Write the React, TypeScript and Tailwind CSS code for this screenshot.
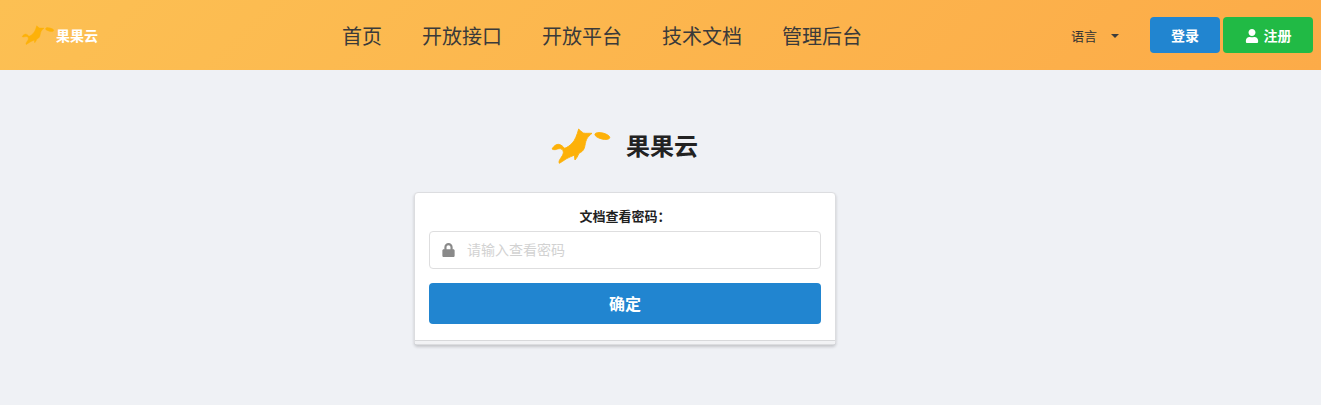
import { FaLock, FaUser } from "react-icons/fa";

const font = "font-['Inter','Noto_Sans_CJK_SC',sans-serif]";

function FoxLogo({ className }: { className: string }) {
  return (
    <svg viewBox="0 0 198 126" className={className} fill="#fdb109" stroke="#fdb109" strokeWidth="2.5" strokeLinejoin="round">
      <path d="M12 75C17 66 25 60 32 61C40 62 45 68 50 73C58 70 65 65 72 58C81 49 87 33 92 15C96 19 100 23 106 27C114 29 122 27 132 28C125 34 119 39 116 46C112 54 112 63 109 72C106 81 99 85 93 88C89 97 86 103 81 108C79 101 79 97 80 93C72 97 62 100 54 105C47 110 41 114 34 118C32 114 33 110 37 104C41 98 46 92 46 85C46 78 40 73 33 74C25 75 20 80 12 75Z" />
      <ellipse cx="163" cy="36" rx="23" ry="9" transform="rotate(14 163 36)" />
    </svg>
  );
}

export default function App() {
  return (
    <div className={`${font} min-h-[405px] bg-[#eff1f5] text-[#1f1f1f]`}>
      <header className="flex items-center justify-between h-[70px] pl-[20px] pr-2 bg-[linear-gradient(135deg,#fcc053,#fcab48)]">
        <div className="flex items-center w-[322px]">
          <FoxLogo className="w-[36px] h-[23px] mb-[2px]" />
          <span className="text-sm font-bold text-white pt-[2px]">果果云</span>
        </div>
        <nav className="flex gap-10 text-[20px] text-[#3a3a3a] pt-[3px]">
          <a>首页</a>
          <a>开放接口</a>
          <a>开放平台</a>
          <a>技术文档</a>
          <a>管理后台</a>
        </nav>
        <div className="flex items-center ml-auto">
          <div className="flex items-center text-[13px] text-[#333] mr-[31px]">
            <span className="pt-[3px]">语言</span>
            <span className="ml-[14px] mt-[2px] border-x-4 border-t-4 border-x-transparent border-t-[#3c3c3c]" />
          </div>
          <button className="w-[70px] h-9 pt-px rounded bg-[#2185d0] text-white text-sm font-bold">登录</button>
          <button className="flex items-center justify-center gap-[5px] w-[90px] h-9 pt-px ml-[3px] rounded bg-[#21ba45] text-white text-sm font-bold">
            <FaUser className="w-[14px] h-[14px]" />
            注册
          </button>
        </div>
      </header>

      <main className="flex flex-col items-center pt-[54px] pr-[71px]">
        <div className="flex items-center gap-3 -ml-1">
          <FoxLogo className="w-[66px] h-[42px]" />
          <h1 className="text-2xl font-bold text-[#222] pt-[3px]">果果云</h1>
        </div>

        <form className="w-[422px] mt-[26px] bg-white border border-[#dcdde0] rounded shadow-[0_2px_3px_rgba(34,36,38,0.2)]">
          <div className="px-[14px] pt-[13px] pb-[16px] border-b border-[#d8d9db]">
            <label className="block text-center text-[13px] font-bold leading-[20px]">文档查看密码：</label>
            <div className="flex items-center h-[38px] mt-[5px] pl-3 border border-[#dededf] rounded">
              <FaLock className="w-[13px] h-[14px] text-[#8a8a8a]" />
              <input
                placeholder="请输入查看密码"
                className="ml-[12px] flex-1 text-sm outline-none placeholder:text-[#d2d2d2]"
              />
            </div>
            <button type="button" className="block w-full h-[41px] mt-[14px] rounded bg-[#2185d0] text-white text-base font-bold">
              确定
            </button>
          </div>
          <div className="h-[3px] bg-[#f2f3f5]" />
        </form>
      </main>
    </div>
  );
}
